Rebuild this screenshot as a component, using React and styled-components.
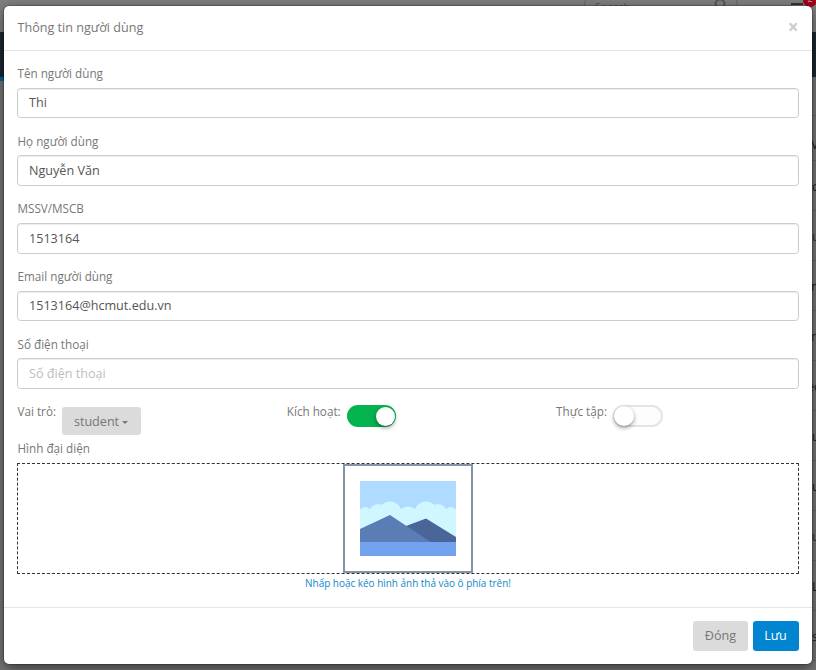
import React from "react";
import styled, { createGlobalStyle } from "styled-components";

const GlobalStyle = createGlobalStyle`
  * { box-sizing: border-box; }
  body {
    margin: 0;
    overflow: hidden;
    font-family: "Open Sans", "Noto Sans", sans-serif;
    font-size: 12.6px;
    line-height: 19.8px;
    color: #777;
  }
  button, input { font-family: inherit; }
`;

const Screen = styled.div`
  position: relative;
  height: 670px;
  overflow: hidden;
  padding: 6px 4px;
`;

const Page = styled.div`
  position: absolute;
  inset: 0;
  background: #767676;
  display: flex;
  flex-direction: column;
`;

const TopBar = styled.div`
  height: 32px;
  flex: none;
  display: flex;
  justify-content: flex-end;
  background: #7f7f7f;
`;

const SearchBox = styled.div`
  width: 154px;
  height: 27px;
  margin: -8px 53px 0 0;
  border: 1px solid #666;
  border-radius: 14px;
  padding: 4px 10px;
  display: flex;
  justify-content: space-between;
  color: #565656;
  font-size: 11px;
`;

const Tasks = styled.div`
  position: relative;
  width: 12px;
  height: 12px;
  margin: 3px 13px 0 0;
  border-top: 2px solid #333;
`;

const Badge = styled.span`
  position: absolute;
  left: 12px;
  top: -12px;
  width: 14px;
  height: 14px;
  border-radius: 50%;
  background: #a0001e;
  color: #c99;
  font-size: 9px;
  line-height: 12px;
  text-align: center;
`;

const NavBar = styled.div`
  height: 45px;
  flex: none;
  background: #1b2732;
`;

const NavAccent = styled.div`
  width: 31px;
  height: 4px;
  flex: none;
  background: #0064a0;
`;

const TableRow = styled.div`
  height: ${(p) => (p.$first ? 35 : p.$short ? 45 : 50)}px;
  flex: none;
  border-bottom: 1px solid #656565;
  margin-left: 800px;
  padding-left: ${(p) => (p.$x || 812) - 800}px;
  display: flex;
  align-items: center;
  padding-top: ${(p) => (p.$short ? 14 : 2)}px;
  color: ${(p) => p.$color || "#191c20"};
  white-space: nowrap;
`;

const Modal = styled.section`
  position: relative;
  height: 658px;
  background: #fff;
  border-radius: 5px;
  box-shadow: 0 4.5px 13.5px rgba(0, 0, 0, 0.5), 0 0 0 1px rgba(0, 0, 0, 0.2);
`;

const Header = styled.header`
  height: 45px;
  border-bottom: 1px solid #e5e5e5;
  padding: 0 13.5px;
  display: flex;
  align-items: center;
  justify-content: space-between;
`;

const Title = styled.h4`
  margin: 0;
  font-size: 12.6px;
  font-weight: 400;
`;

const Close = styled.button`
  border: 0;
  padding: 0;
  margin-top: -1px;
  background: none;
  color: #ccc;
  font-size: 18.9px;
  line-height: 19px;
  font-weight: 700;
`;

const Body = styled.div`
  height: 556px;
  padding: 13px 13px 0;
`;

const Field = styled.div`
  height: 67.7px;
`;

const Label = styled.label`
  display: block;
  height: 23.6px;
  padding-left: 0.5px;
  font-size: 11.7px;
  line-height: 18.4px;
  white-space: nowrap;
`;

const Input = styled.input`
  display: block;
  width: 100%;
  height: 30.6px;
  border: 1px solid #ccc;
  border-radius: 3.6px;
  padding: 0 11px;
  color: #555;
  font-size: 12.6px;
  box-shadow: inset 0 1px 1px rgba(0, 0, 0, 0.075);
  outline: none;
  &::placeholder { color: #bdbdbd; opacity: 1; }
`;

const Options = styled.div`
  display: grid;
  grid-template-columns: 269.3px 269.3px 1fr;
  height: 36.9px;
  margin-top: -0.2px;
`;

const Option = styled.div`
  display: flex;
  align-items: flex-start;
  gap: 6px;
`;

const RoleButton = styled.button`
  display: flex;
  align-items: center;
  justify-content: center;
  gap: 3px;
  width: 79px;
  height: 28px;
  margin-top: 5px;
  padding: 1px 1px 0 0;
  border: 0;
  border-radius: 3px;
  background: #dbdbdb;
  color: #777;
  font-size: 12.6px;
`;

const Caret = styled.span`
  border: 3.5px solid transparent;
  border-top-color: #777;
  border-bottom: 0;
  margin-top: 2px;
`;

const Switch = styled.span`
  display: flex;
  align-items: center;
  justify-content: ${(p) => (p.$on ? "flex-end" : "flex-start")};
  width: ${(p) => (p.$on ? 49 : 50)}px;
  height: 22px;
  margin-top: 3px;
  padding: 0 1px;
  border-radius: 11px;
  background: ${(p) => (p.$on ? "#04b34f" : "#fdfdfd")};
  box-shadow: inset 0 0 0 ${(p) => (p.$on ? 0 : 2)}px #e4e4e4;
`;

const Knob = styled.span`
  width: ${(p) => (p.$on ? 19 : 20)}px;
  height: ${(p) => (p.$on ? 19 : 20)}px;
  border-radius: 50%;
  background: #fff;
  box-shadow: 0 2px 4px rgba(0, 0, 0, 0.4);
`;

const DropZone = styled.div`
  height: 111px;
  border: 1px dashed #333;
  display: flex;
  justify-content: center;
`;

const Preview = styled.div`
  width: 130px;
  height: 109px;
  border: 2px solid #8294a5;
  padding: 15px;
`;

const Hint = styled.p`
  margin: 0;
  text-align: center;
  color: #0e88cc;
  font-size: 9.95px;
  line-height: 18px;
`;

const Footer = styled.footer`
  height: 57px;
  border-top: 1px solid #e5e5e5;
  padding: 13px 13px 0;
  display: flex;
  justify-content: flex-end;
  gap: 5px;
`;

const Action = styled.button`
  width: ${(p) => (p.$primary ? 46 : 55)}px;
  height: 30px;
  padding: 0 ${(p) => (p.$primary ? 1 : 0)}px 1px 0;
  border: 0;
  border-radius: 3px;
  background: ${(p) => (p.$primary ? "#0285d0" : "#dbdbdb")};
  color: ${(p) => (p.$primary ? "#fff" : "#777")};
  font-size: 12.6px;
`;

const rows = [
  { text: "", first: true },
  { text: "V", short: true, x: 811 },
  { text: "c" }, { text: "u", color: "#173c3c" }, { text: "n", x: 811 },
  { text: "n", x: 811, color: "#20254c" }, { text: "ec", x: 807 },
  { text: "u" }, { text: "u" }, { text: "u", color: "#173c3c" },
  { text: "L" }, { text: "s" },
];

const fields = [
  { label: "Tên người dùng", value: "Thi" },
  { label: "Họ người dùng", value: "Nguyễn Văn" },
  { label: "MSSV/MSCB", value: "1513164" },
  { label: "Email người dùng", value: "1513164@hcmut.edu.vn" },
  { label: "Số điện thoại", value: "", placeholder: "Số điện thoại" },
];

function Landscape() {
  return (
    <svg width="96" height="75" viewBox="0 0 96 75" display="block">
      <rect width="96" height="75" fill="#aedbff" />
      <g fill="#d0f6ff">
        <rect y="31" width="96" height="31" />
        <rect x="12" y="27.5" width="72" height="10" />
        <circle cx="5" cy="32" r="6" />
        <circle cx="18" cy="32" r="9" />
        <circle cx="30" cy="32" r="11.5" />
        <circle cx="48" cy="34" r="8.5" />
        <circle cx="66" cy="32" r="11.5" />
        <circle cx="78" cy="32" r="9" />
        <circle cx="91" cy="32" r="6" />
      </g>
      <path d="M38 48 66 37.5 96 56V62H38Z" fill="#4a6699" />
      <path d="M0 48 30 34 72 62H0Z" fill="#5b7db6" />
      <rect y="61" width="96" height="14" fill="#73a2ee" />
    </svg>
  );
}

export default function App() {
  return (
    <Screen>
      <GlobalStyle />
      <Page aria-hidden="true">
        <TopBar>
          <SearchBox>
            <span>Search...</span>
            <svg width="15" height="15" viewBox="0 0 15 15" fill="none" stroke="#565656" strokeWidth="2">
              <circle cx="8" cy="7" r="4.5" />
              <path d="m11 10 4 4" />
            </svg>
          </SearchBox>
          <Tasks><Badge>2</Badge></Tasks>
        </TopBar>
        <NavBar />
        <NavAccent />
        {rows.map((r, i) => (
          <TableRow key={i} $first={r.first} $short={r.short} $x={r.x} $color={r.color}>{r.text}</TableRow>
        ))}
      </Page>
      <Modal role="dialog">
        <Header>
          <Title>Thông tin người dùng</Title>
          <Close aria-label="Đóng">×</Close>
        </Header>
        <Body>
          {fields.map((f) => (
            <Field key={f.label}>
              <Label>{f.label}</Label>
              <Input defaultValue={f.value} placeholder={f.placeholder} />
            </Field>
          ))}
          <Options>
            <Option>
              <Label>Vai trò:</Label>
              <RoleButton>student<Caret /></RoleButton>
            </Option>
            <Option>
              <Label>Kích hoạt:</Label>
              <Switch $on><Knob $on /></Switch>
            </Option>
            <Option>
              <Label>Thực tập:</Label>
              <Switch><Knob /></Switch>
            </Option>
          </Options>
          <Label>Hình đại diện</Label>
          <DropZone>
            <Preview><Landscape /></Preview>
          </DropZone>
          <Hint>Nhấp hoặc kéo hình ảnh thả vào ô phía trên!</Hint>
        </Body>
        <Footer>
          <Action>Đóng</Action>
          <Action $primary>Lưu</Action>
        </Footer>
      </Modal>
    </Screen>
  );
}
